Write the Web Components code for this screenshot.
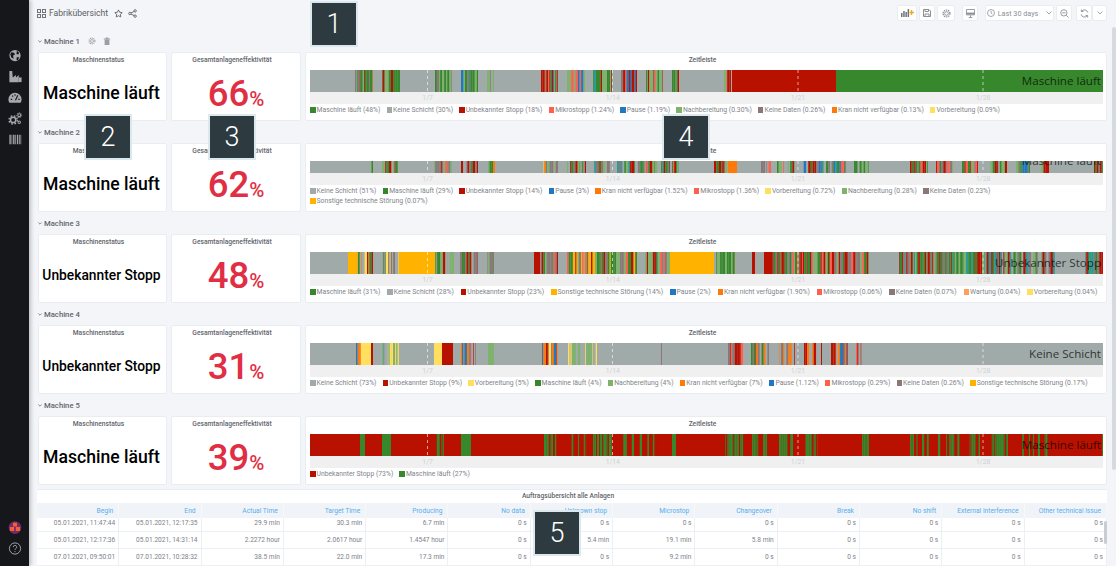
<!DOCTYPE html>
<html lang="de">
<head>
<meta charset="utf-8">
<title>Fabrikübersicht</title>
<style>
  html, body { margin: 0; height: 100%; overflow: hidden; background: #f4f5f8; font-family: Roboto, "Liberation Sans", sans-serif; }
  #app { display: flex; height: 566px; position: relative; overflow: hidden; }
  #main { flex: 1; min-width: 0; padding: 0 9px 0 9px; display: flex; flex-direction: column; }
</style>
</head>
<body>
<div id="app">
  <side-menu></side-menu>
  <div id="main">
    <dash-header>Fabrikübersicht</dash-header>

    <dash-row name="Machine 1" tools>
      <status-panel>Maschine läuft</status-panel>
      <oee-panel value="66"></oee-panel>
      <timeline-panel machine="1" label="Maschine läuft"></timeline-panel>
    </dash-row>
    <dash-row name="Machine 2">
      <status-panel>Maschine läuft</status-panel>
      <oee-panel value="62"></oee-panel>
      <timeline-panel machine="2" label="Maschine läuft" shift="-6"></timeline-panel>
    </dash-row>
    <dash-row name="Machine 3">
      <status-panel small>Unbekannter Stopp</status-panel>
      <oee-panel value="48"></oee-panel>
      <timeline-panel machine="3" label="Unbekannter Stopp" gap="7"></timeline-panel>
    </dash-row>
    <dash-row name="Machine 4">
      <status-panel small>Unbekannter Stopp</status-panel>
      <oee-panel value="31"></oee-panel>
      <timeline-panel machine="4" label="Keine Schicht"></timeline-panel>
    </dash-row>
    <dash-row name="Machine 5">
      <status-panel>Maschine läuft</status-panel>
      <oee-panel value="39"></oee-panel>
      <timeline-panel machine="5" label="Maschine läuft"></timeline-panel>
    </dash-row>

    <orders-table></orders-table>
  </div>

  <page-scrollbar></page-scrollbar>

  <!-- numbered callouts lying over the dashboard -->
  <call-out style="left:310px;top:1px">1</call-out>
  <call-out style="left:84px;top:114px">2</call-out>
  <call-out style="left:208px;top:114px">3</call-out>
  <call-out style="left:662px;top:114px">4</call-out>
  <call-out style="left:533px;top:510px">5</call-out>
</div>

<script>
const COLORS = {
  G: '#37872d', L: '#7eb26d', R: '#b81100', S: '#ff5f4f', B: '#1f78c1', O: '#ff780a',
  Y: '#ffdf5d', A: '#ffb300', K: '#a0aaa8', D: '#8a7878', T: '#2b9a96', W: '#ffa05a'
};

// [from x, to x, palette]: one letter is a solid block, more letters are thin random stripes
const TIMELINES = {
  1: {
    base: 'K',
    ranges: [
      [355,373,'GGLLRDGLO'],[382,400,'GGGLLRBGD'],[435,452,'GGGLLGRD'],[461,478,'GLLRSGBD'],[487,494,'LLDK'],
      [541,558,'GGLRLBS'],[567,585,'SLGGLBD'],[593,612,'LGGLRTB'],[621,637,'LGRSGBD'],[646,663,'RGGGLSD'],[672,679,'GGRL'],
      [724,731,'GOLRS'],[732,836,'R'],[836,1103,'G']
    ],
    legend: [['G','Maschine läuft (48%)'],['K','Keine Schicht (30%)'],['R','Unbekannter Stopp (18%)'],['S','Mikrostopp (1.24%)'],['B','Pause (1.19%)'],['L','Nachbereitung (0.30%)'],['D','Keine Daten (0.26%)'],['O','Kran nicht verfügbar (0.13%)'],['Y','Vorbereitung (0.09%)']]
  },
  2: {
    base: 'K',
    ranges: [
      [366,373,'GGLK'],[382,400,'GGGRLK'],[434,452,'DGLSRK'],[461,478,'LGKRDS'],[488,493,'LGK'],[493,495,'O'],
      [541,558,'DBGLYKO'],[567,586,'RGGLDK'],[592,612,'DGLRKT'],[617,679,'GLDRSKGT'],
      [714,728,'GRSLK'],[728,737,'O'],[761,771,'DSRK'],[777,795,'RSGLK'],[803,847,'RGGBTDSK'],[854,869,'GGLK'],
      [910,928,'DGRLS'],[936,953,'GLDSR'],[962,978,'DRGLS'],[989,1007,'RGLK'],[1016,1030,'GLDB'],[1041,1049,'LGR'],[1094,1103,'GDR']
    ],
    legend: [['K','Keine Schicht (51%)'],['G','Maschine läuft (29%)'],['R','Unbekannter Stopp (14%)'],['B','Pause (3%)'],['O','Kran nicht verfügbar (1.52%)'],['S','Mikrostopp (1.36%)'],['Y','Vorbereitung (0.72%)'],['L','Nachbereitung (0.28%)'],['D','Keine Daten (0.23%)'],['A','Sonstige technische Störung (0.07%)']]
  },
  3: {
    base: 'K',
    ranges: [
      [348,355,'A'],[355,373,'AYORKG'],[382,399,'GDYLK'],[399,435,'A'],[435,454,'GLDRK'],[460,478,'RDGLK'],[487,494,'DLG'],
      [534,540,'R'],[540,558,'GLDRS'],[567,637,'GLRDSLAG'],[645,670,'RGDLS'],[670,714,'A'],[714,735,'GGLAK'],[752,755,'R'],
      [764,772,'R'],[772,869,'RGLRDSGR'],[869,899,'K'],[899,985,'RGLGGDTR'],[985,1055,'DGTRLTK'],[1085,1103,'GTRD']
    ],
    legend: [['G','Maschine läuft (31%)'],['K','Keine Schicht (28%)'],['R','Unbekannter Stopp (23%)'],['A','Sonstige technische Störung (14%)'],['B','Pause (2%)'],['O','Kran nicht verfügbar (1.90%)'],['S','Mikrostopp (0.06%)'],['D','Keine Daten (0.07%)'],['W','Wartung (0.04%)'],['Y','Vorbereitung (0.04%)']]
  },
  4: {
    base: 'K',
    ranges: [
      [356,362,'OBYA'],[362,371,'Y'],[371,373,'R'],[382,399,'LLYKYB'],[434,442,'Y'],[442,453,'R'],[461,476,'RSKOB'],[488,494,'L'],
      [541,558,'OBYKR'],[568,597,'LYKLY'],[661,662,'D'],[728,743,'RRDS'],[751,769,'RGOKD'],[778,795,'DOKR'],[804,822,'ROKS'],
      [831,848,'OBRKR'],[856,864,'RRSK']
    ],
    legend: [['K','Keine Schicht (73%)'],['R','Unbekannter Stopp (9%)'],['Y','Vorbereitung (5%)'],['G','Maschine läuft (4%)'],['L','Nachbereitung (4%)'],['O','Kran nicht verfügbar (7%)'],['B','Pause (1.12%)'],['S','Mikrostopp (0.29%)'],['D','Keine Daten (0.26%)'],['A','Sonstige technische Störung (0.17%)']]
  },
  5: {
    base: 'R',
    ranges: [
      [360,365,'G'],[382,391,'G'],[435,444,'GGR'],[461,471,'G'],[544,558,'GRG'],[571,587,'GGR'],[593,612,'GRG'],[621,659,'GRR'],
      [672,676,'G'],[724,744,'GRG'],[752,771,'GRG'],[779,797,'GRG'],[804,818,'GRG'],[862,869,'GGR'],[910,929,'GRR'],[938,980,'RGR'],
      [990,1008,'GGR'],[1018,1053,'RGR'],[1097,1103,'GR']
    ],
    legend: [['R','Unbekannter Stopp (73%)'],['G','Maschine läuft (27%)']]
  }
};

// small seeded generator, so the stripes stay the same on every load
function makeRandom(seed) {
  return () => {
    seed = (seed * 1664525 + 1013904223) % 4294967296;
    return seed / 4294967296;
  };
}

function barRects(data, machine) {
  const random = makeRandom(machine * 7919);
  let out = '';
  for (const [from, to, palette] of data.ranges) {
    if (palette.length === 1) {
      out += `<rect x="${from}" y="0" width="${to - from}" height="10" fill="${COLORS[palette]}"/>`;
      continue;
    }
    let x = from;
    while (x < to) {
      const w = Math.min(0.6 + random() * 2, to - x);
      const c = palette[Math.floor(random() * palette.length)];
      out += `<rect x="${x.toFixed(2)}" y="0" width="${w.toFixed(2)}" height="10" fill="${COLORS[c]}"/>`;
      x += w;
    }
  }
  return out;
}

const PANEL_CSS = `
  background: #fff;
  border: 1px solid #e9edf2;
  border-radius: 2px;
  box-sizing: border-box;
  min-width: 0;
  overflow: hidden;
`;
const TITLE_CSS = `
  font: 500 6.7px/14px Roboto, "Liberation Sans", sans-serif;
  color: #62656c;
  text-align: center;
  padding-right: 8px;
`;

class SideMenu extends HTMLElement {
  connectedCallback() {
    const root = this.attachShadow({ mode: 'open' });
    root.innerHTML = `
      <style>
        :host { display: flex; flex-direction: column; align-items: center; width: 29px; flex: none; height: 566px;
                background: #15171b; box-shadow: 2px 0 4px rgba(0,0,0,.22); position: relative; z-index: 1; color: #a5a8ad; }
        .top { display: flex; flex-direction: column; gap: 6px; margin-top: 48px; }
        .bottom { margin-top: auto; display: flex; flex-direction: column; align-items: center; gap: 6px; margin-bottom: 10px; }
        svg { display: block; width: 16px; height: 15px; }
      </style>
      <div class="top">
        <svg viewBox="0 0 16 16"><circle cx="8" cy="8" r="6" fill="currentColor"/><path d="M4 4.500l3 .5 1 2-2 1 .5 3.500L4 10 3 7zM10 3l2.500 2-1 2-2-.5zM10 9.500l2.500.5-1.500 3-1.500-.5z" fill="#15171b"/></svg>
        <svg viewBox="0 0 16 16"><path d="M2 2h3l.6 7L9 6.500V9l3-2.500V14H2z" fill="currentColor"/><path d="M12 9h3v5h-3z" fill="currentColor"/></svg>
        <svg viewBox="0 0 16 16"><path d="M8 3a7 7 0 0 0-7 7c0 1.400.4 2.500 1 3.500h12c.6-1 1-2.100 1-3.500a7 7 0 0 0-7-7z" fill="currentColor"/><path d="M8.500 11l2.500-5.500M3.500 10h1.500M5 6l1 1M8 4.500v1.500M11.500 10H13" stroke="#15171b" stroke-width="1.200" fill="none"/></svg>
        <svg viewBox="0 0 16 16" fill="none" stroke="currentColor"><circle cx="6" cy="9.500" r="2.800" stroke-width="1.600"/><circle cx="6" cy="9.500" r="4.400" stroke-width="1.500" stroke-dasharray="1.800 1.700"/><circle cx="12.500" cy="4.500" r="1.500" stroke-width="1.100"/><circle cx="12.500" cy="4.500" r="2.600" stroke-width="1" stroke-dasharray="1.200 1.100"/><circle cx="12.500" cy="12" r="1.300" stroke-width="1.100"/></svg>
        <svg viewBox="0 0 16 16" fill="currentColor"><path d="M2 3h1.500v10H2zM4.300 3h.8v10h-.8zM6 3h1.500v10H6zM8.300 3h.8v10h-.8zM10 3h1.500v10H10zM12.300 3h.8v10h-.8zM13.800 3h.8v10h-.8z"/></svg>
      </div>
      <div class="bottom">
        <svg viewBox="0 0 16 16"><circle cx="8" cy="8" r="6.800" fill="#6f2a70"/><path d="M5.900 3h4.200v4H5.900zM2.600 7.400h4.500v4.300H2.600zM8.900 7.400h4.500v4.300H8.900z" fill="#f4602f"/></svg>
        <svg viewBox="0 0 16 16" fill="none" stroke="currentColor"><circle cx="8" cy="8" r="6" stroke-width="1"/><path d="M6.200 6.500a1.800 1.800 0 1 1 2.600 1.600c-.6.300-.8.700-.8 1.300" stroke-width="1"/><path d="M8 10.800v1" stroke-width="1"/></svg>
      </div>`;
  }
}

class DashHeader extends HTMLElement {
  connectedCallback() {
    const root = this.attachShadow({ mode: 'open' });
    const btn = (w, inner) => `<span class="btn" style="width:${w}px">${inner}</span>`;
    root.innerHTML = `
      <style>
        :host { display: flex; align-items: center; height: 30px; flex: none; box-sizing: border-box; padding: 0 0 4px 0; color: #6f737a; }
        .title { font: 400 8.600px Roboto, "Liberation Sans", sans-serif; color: #5a5d64; margin: 0 6px 0 3px; white-space: nowrap; }
        svg { display: block; flex: none; }
        .left { display: flex; align-items: center; margin-left: -1px; }
        .gap { width: 5px; }
        .tools { margin-left: auto; display: flex; gap: 2px; align-items: center; }
        .btn { display: flex; align-items: center; justify-content: center; gap: 3px; height: 16px; box-sizing: border-box; background: #fff; white-space: nowrap;
               border: 1px solid #e9edf2; border-radius: 2px; color: #8b8f96; font: 400 7.200px Roboto, "Liberation Sans", sans-serif; flex: none; }
        .sep { width: 3px; }
      </style>
      <div class="left">
        <svg width="9" height="9" viewBox="0 0 9 9" fill="none" stroke="#6f737a"><rect x=".5" y=".5" width="3" height="3"/><rect x="5.500" y=".5" width="3" height="3"/><rect x=".5" y="5.500" width="3" height="3"/><rect x="5.500" y="5.500" width="3" height="3"/></svg>
        <span class="title"><slot></slot></span>
        <svg width="9" height="9" viewBox="0 0 24 24" fill="none" stroke="#5d6168" stroke-width="2.400"><path d="M12 2.500l3 6.200 6.800 1-4.900 4.700 1.100 6.800-6-3.200-6 3.200 1.100-6.800L2.200 9.700l6.800-1z"/></svg>
        <span class="gap"></span>
        <svg width="9" height="9" viewBox="0 0 24 24" fill="none" stroke="#5d6168" stroke-width="2.400"><circle cx="5" cy="12" r="3.200"/><circle cx="19" cy="5" r="3.200"/><circle cx="19" cy="19" r="3.200"/><path d="M8 10.500l8-4M8 13.500l8 4"/></svg>
      </div>
      <div class="tools">
        ${btn(20, `<svg width="13" height="8" viewBox="0 0 13 8"><path d="M0 4h1.500v4H0zM2.200 2h1.500v6H2.200zM4.400 3h1.500v5H4.400zM6.600 0h1.500v8H6.600z" fill="#6f737a"/><path d="M10.500 1v5M8.500 3.500h4.500" stroke="#f5a623" stroke-width="1.500"/></svg>`)}
        ${btn(16, `<svg width="8" height="8" viewBox="0 0 8 8" fill="none" stroke="#8b8f96"><path d="M.5.5h5.500l1.500 1.500v5.500h-7z"/><path d="M2 .5v2h3.500v-2M2 7.500V5h4v2.500"/></svg>`)}
        ${btn(18, `<svg width="9" height="9" viewBox="0 0 10 10" fill="none" stroke="#8b8f96"><circle cx="5" cy="5" r="2"/><circle cx="5" cy="5" r="3.800" stroke-width="1.500" stroke-dasharray="1.500 .9"/></svg>`)}
        <span class="sep"></span>
        ${btn(16, `<svg width="9" height="9" viewBox="0 0 10 10" fill="none" stroke="#8b8f96"><path d="M.5.5h9v6h-9z"/><path d="M.5 5h9" stroke-width="2"/><path d="M5 7v2M3 9.500h4"/></svg>`)}
        <span class="sep"></span>
        ${btn(69, `<svg width="8" height="8" viewBox="0 0 8 8" fill="none" stroke="#8b8f96" stroke-width=".8"><circle cx="4" cy="4" r="3.500"/><path d="M4 1.800V4l1.500 1"/></svg><span>Last 30 days</span><svg style="margin-left:5px" width="6" height="4" viewBox="0 0 6 4" fill="none" stroke="#8b8f96" stroke-width=".8"><path d="M.5.5L3 3l2.500-2.500"/></svg>`)}
        ${btn(16, `<svg width="9" height="9" viewBox="0 0 10 10" fill="none" stroke="#8b8f96"><circle cx="4.300" cy="4.300" r="3.500"/><path d="M7 7l2.500 2.500M2.500 4.300h3.600"/></svg>`)}
        <span style="display:flex;margin-left:2px">
          ${btn(16, `<svg width="9" height="9" viewBox="0 0 10 10" fill="none" stroke="#8b8f96"><path d="M8.800 4A4 4 0 0 0 1.800 2.500M1.200 6a4 4 0 0 0 7 1.500"/><path d="M1.500.5v2.300h2.300M8.500 9.500V7.200H6.200"/></svg>`)}
          ${btn(15, `<svg width="6" height="4" viewBox="0 0 6 4" fill="none" stroke="#8b8f96" stroke-width=".8"><path d="M.5.5L3 3l2.500-2.500"/></svg>`)}
        </span>
      </div>`;
  }
}

class DashRow extends HTMLElement {
  connectedCallback() {
    const root = this.attachShadow({ mode: 'open' });
    const tools = this.hasAttribute('tools') ? `
      <svg style="margin-left:8px" width="8" height="8" viewBox="0 0 10 10" fill="none" stroke="#9a9ea4"><circle cx="5" cy="5" r="1.800"/><circle cx="5" cy="5" r="3.600" stroke-width="1.400" stroke-dasharray="1.400 .9"/></svg>
      <svg style="margin-left:7px" width="8" height="8" viewBox="0 0 10 10" fill="#9a9ea4"><path d="M1 2h8v1H1zM3.500.5h3V2h-3zM2 3.500h6V10H2z"/></svg>` : '';
    root.innerHTML = `
      <style>
        :host { display: block; flex: none; }
        .title { height: 22px; display: flex; align-items: center; font: 500 7.700px Roboto, "Liberation Sans", sans-serif; color: #62656c; }
        .title > svg:first-child { margin-right: 2px; }
        .panels { display: grid; grid-template-columns: 129px 130px 802px; gap: 4px; height: 69px; }
      </style>
      <div class="title">
        <svg width="4" height="3" viewBox="0 0 6 4" fill="none" stroke="#52545c" stroke-width="1"><path d="M.5.5L3 3l2.500-2.500"/></svg>
        <span>${this.getAttribute('name')}</span>${tools}
      </div>
      <div class="panels"><slot></slot></div>`;
  }
}

class StatusPanel extends HTMLElement {
  connectedCallback() {
    const root = this.attachShadow({ mode: 'open' });
    root.innerHTML = `
      <style>
        :host { ${PANEL_CSS} display: flex; flex-direction: column; }
        .t { ${TITLE_CSS} }
        .v { flex: 1; display: flex; align-items: center; justify-content: center; padding: 0 2px 2px 0; white-space: nowrap;
             font: 500 17.600px Roboto, "Liberation Sans", sans-serif; color: #000; }
        :host([small]) .v { font-size: 13.800px; }
      </style>
      <div class="t">Maschinenstatus</div>
      <div class="v"><slot></slot></div>`;
  }
}

class OeePanel extends HTMLElement {
  connectedCallback() {
    const root = this.attachShadow({ mode: 'open' });
    root.innerHTML = `
      <style>
        :host { ${PANEL_CSS} display: flex; flex-direction: column; }
        .t { ${TITLE_CSS} }
        .v { flex: 1; display: flex; align-items: baseline; justify-content: center; margin-top: 3px;
             font: 500 36.500px/48px Roboto, "Liberation Sans", sans-serif; color: #e02f44; }
        .v span { font-size: 20.500px; }
      </style>
      <div class="t">Gesamtanlageneffektivität</div>
      <div class="v">${this.getAttribute('value')}<span>%</span></div>`;
  }
}

class TimelinePanel extends HTMLElement {
  connectedCallback() {
    const root = this.attachShadow({ mode: 'open' });
    const machine = Number(this.getAttribute('machine'));
    const data = TIMELINES[machine];
    const dashes = [427.5, 612.5, 798, 983].map(x =>
      `<line x1="${x}" x2="${x}" y1="0" y2="10" stroke="#fff" stroke-opacity=".6" stroke-width="1" stroke-dasharray="3 3" vector-effect="non-scaling-stroke"/>`).join('');
    const ticks = ['1/7', '1/14', '1/21', '1/28'].map(t => `<span>${t}</span>`).join('');
    const legend = data.legend.map(([c, text]) =>
      `<span class="item"><i style="background:${COLORS[c]}"></i>${text}</span>`).join('');
    root.innerHTML = `
      <style>
        :host { ${PANEL_CSS} display: flex; flex-direction: column; padding: 0 3px 0 4px; --shift: ${this.getAttribute('shift') || 0}px; }
        .t { ${TITLE_CSS} height: 17px; }
        .bar { flex: 1; min-height: 0; position: relative; overflow: hidden; background: ${COLORS[data.base]}; }
        .bar svg { display: block; width: 100%; height: 100%; filter: blur(.35px); }
        .label { position: absolute; right: 2px; top: 50%; transform: translateY(calc(-50% - 1px + var(--shift)));
                 font: 400 11.600px "Open Sans", "Liberation Sans", sans-serif; color: rgba(0,0,0,.72); white-space: nowrap; }
        .axis { height: 12px; flex: none; background: #f0f0f0; display: grid; grid-template-columns: repeat(4, 185.2px); padding-left: 25px;
                font: 400 6.800px/13px Roboto, "Liberation Sans", sans-serif; color: #cfd1d4; }
        .axis span { text-align: center; }
        .legend { flex: none; display: flex; flex-wrap: wrap; column-gap: ${this.getAttribute('gap') || 6.2}px; padding: 0 0 5px; margin-top: 1px;
                  font: 400 6.800px/10px Roboto, "Liberation Sans", sans-serif; color: #80848a; }
        .item { display: flex; align-items: center; white-space: nowrap; }
        .item i { width: 5.500px; height: 5.500px; margin-right: 1px; flex: none; }
      </style>
      <div class="t">Zeitleiste</div>
      <div class="bar">
        <svg viewBox="310 0 793 10" preserveAspectRatio="none">${barRects(data, machine)}${dashes}</svg>
        <span class="label">${this.getAttribute('label')}</span>
      </div>
      <div class="axis">${ticks}</div>
      <div class="legend">${legend}</div>`;
  }
}

class OrdersTable extends HTMLElement {
  connectedCallback() {
    const root = this.attachShadow({ mode: 'open' });
    const heads = ['Begin','End','Actual Time','Target Time','Producing','No data','Unknown stop','Microstop','Changeover','Break','No shift','External interference','Other technical issue'];
    const rows = [
      ['05.01.2021, 11:47:44','05.01.2021, 12:17:35','29.9 min','30.3 min','6.7 min','0 s','0 s','0 s','0 s','0 s','0 s','0 s','0 s'],
      ['05.01.2021, 12:17:36','05.01.2021, 14:31:14','2.2272 hour','2.0617 hour','1.4547 hour','0 s','5.4 min','19.1 min','5.8 min','0 s','0 s','0 s','0 s'],
      ['07.01.2021, 09:50:01','07.01.2021, 10:28:32','38.5 min','22.0 min','17.3 min','0 s','0 s','9.2 min','0 s','0 s','0 s','0 s','0 s']
    ];
    root.innerHTML = `
      <style>
        :host { display: block; flex: 1; min-height: 0; margin: 4px 0 0 -1px; width: 1070px; position: relative; background: #fff;
                border-top: 1px solid #e9edf2; font-family: Roboto, "Liberation Sans", sans-serif; overflow: hidden; box-sizing: border-box; }
        .t { ${TITLE_CSS} height: 13px; line-height: 13px; }
        table { width: 100%; table-layout: fixed; border-collapse: separate; border-spacing: 0; }
        th { height: 15px; padding: 0 5px 0 0; background: #f0f4f9; border-right: 1px solid #f7f8fa; color: #5aaeea; font-size: 6.700px; font-weight: 400; text-align: right; white-space: nowrap; box-sizing: border-box; }
        td { height: 17px; line-height: 16px; padding: 0 3px 0 0; color: #7d8188; font-size: 6.600px; text-align: right; border-right: 1px solid #eceff3; border-bottom: 1px solid #eceff3; white-space: nowrap; box-sizing: border-box; }
        tr:first-child td { height: 14px; line-height: 10px; padding-bottom: 3px; }
        .thumb { position: absolute; right: 0; top: 31px; width: 3px; height: 23px; background: #c9cdd3; border-radius: 2px; }
      </style>
      <div class="t">Auftragsübersicht alle Anlagen</div>
      <table>
        <thead><tr>${heads.map(h => `<th>${h}</th>`).join('')}</tr></thead>
        <tbody>${rows.map(r => `<tr>${r.map(c => `<td>${c}</td>`).join('')}</tr>`).join('')}</tbody>
      </table>
      <div class="thumb"></div>`;
  }
}

class PageScrollbar extends HTMLElement {
  connectedCallback() {
    const root = this.attachShadow({ mode: 'open' });
    root.innerHTML = `<style>:host { position: absolute; right: 0; top: 27px; width: 4px; height: 443px; background: #d6dae0; border-radius: 2px; }</style>`;
  }
}

class CallOut extends HTMLElement {
  connectedCallback() {
    const root = this.attachShadow({ mode: 'open' });
    root.innerHTML = `
      <style>
        :host { position: absolute; width: 48px; height: 46px; box-sizing: border-box; z-index: 5; display: flex; align-items: center; justify-content: center;
                background: #2d3a40; border: 2px solid #dbe9ee; color: #fff; font: 300 27px Roboto, "Liberation Sans", sans-serif; }
      </style>
      <slot></slot>`;
  }
}

customElements.define('side-menu', SideMenu);
customElements.define('dash-header', DashHeader);
customElements.define('dash-row', DashRow);
customElements.define('status-panel', StatusPanel);
customElements.define('oee-panel', OeePanel);
customElements.define('timeline-panel', TimelinePanel);
customElements.define('orders-table', OrdersTable);
customElements.define('page-scrollbar', PageScrollbar);
customElements.define('call-out', CallOut);
</script>
</body>
</html>
